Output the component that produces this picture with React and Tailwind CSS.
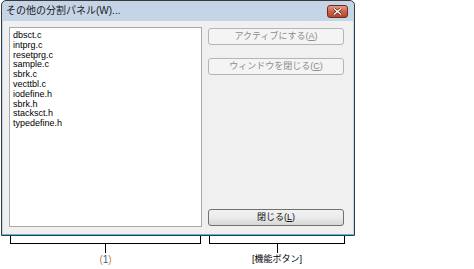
const FONT = { fontFamily: '"Liberation Sans", "Noto Sans CJK JP", sans-serif' };

const files = [
  "dbsct.c",
  "intprg.c",
  "resetprg.c",
  "sample.c",
  "sbrk.c",
  "vecttbl.c",
  "iodefine.h",
  "sbrk.h",
  "stacksct.h",
  "typedefine.h",
];

function DlgButton({ label, mnemonic, disabled }) {
  return (
    <div
      className={
        "h-[17px] w-full rounded-[3px] border flex items-center justify-center text-[9px] leading-none " +
        (disabled
          ? "border-[#b5b5b5] bg-[#f4f4f4] text-[#8c8c8c]"
          : "border-[#707070] bg-gradient-to-b from-[#f2f2f2] via-[#ebebeb] to-[#d6d6d6] text-[#111]")
      }
    >
      {label}(<span className="underline">{mnemonic}</span>)
    </div>
  );
}

function Bracket({ width, label }) {
  return (
    <div className="flex flex-col items-center" style={{ width }}>
      <div className="w-full h-[8px] border-x border-b border-black" />
      <div className="w-px h-[9px] bg-black" />
      <div className="mt-[1px] text-[9px] leading-[11px]">{label}</div>
    </div>
  );
}

export default function App() {
  return (
    <div className="w-[474px] h-[269px] bg-white overflow-hidden" style={FONT}>
      <div className="ml-px w-[354px] h-[236px] flex flex-col border border-[#3a3a3a] rounded-t-[5px] bg-gradient-to-b from-[#c4d4e6] to-[#dbe6f1]">
        {/* title bar */}
        <div className="h-[20px] flex items-center justify-between pl-[4px] pr-[6px]">
          <span className="text-[10px] text-[#1a1a1a] leading-none">その他の分割パネル(W)...</span>
          <div className="w-[21px] h-[13px] mt-[1px] rounded-[3px] border border-[#6a2c20] bg-gradient-to-b from-[#e29a84] via-[#cf6148] to-[#b9432c] flex items-center justify-center">
            <svg width="9" height="7" viewBox="0 0 9 7">
              <path d="M1 0.5 L8 6.5 M8 0.5 L1 6.5" stroke="#4a1a12" strokeWidth="2.6" />
              <path d="M1 0.5 L8 6.5 M8 0.5 L1 6.5" stroke="#fff" strokeWidth="1.4" />
            </svg>
          </div>
        </div>
        {/* body */}
        <div className="flex-1 bg-[#f0f0f0] border-x border-b border-x-[#b9d7ea] border-b-[#3fc0ea] flex pl-[6px] pr-[9px] pt-[6px] pb-[7px] gap-[6px]">
          <div className="w-[193px] h-[200px] border border-[#a9a9a9] bg-white pl-[3px] pt-[3px]">
            {files.map((f) => (
              <div key={f} className="text-[9px] leading-[9.8px] text-black">
                {f}
              </div>
            ))}
          </div>
          <div className="flex-1 flex flex-col pt-[1px]">
            <DlgButton label="アクティブにする" mnemonic="A" disabled />
            <div className="mt-[13px]">
              <DlgButton label="ウィンドウを閉じる" mnemonic="C" disabled />
            </div>
            <div className="mt-auto mb-[1px]">
              <DlgButton label="閉じる" mnemonic="L" />
            </div>
          </div>
        </div>
      </div>
      {/* annotations */}
      <div className="flex pl-[10px] gap-[8px]">
        <Bracket
          width={191}
          label={
            <span className="text-[10px]">
              <span className="text-[#c7812f]">(</span>
              <span className="text-[#2a62b0]">1</span>
              <span className="text-[#c7812f]">)</span>
            </span>
          }
        />
        <Bracket width={136} label="[機能ボタン]" />
      </div>
    </div>
  );
}
